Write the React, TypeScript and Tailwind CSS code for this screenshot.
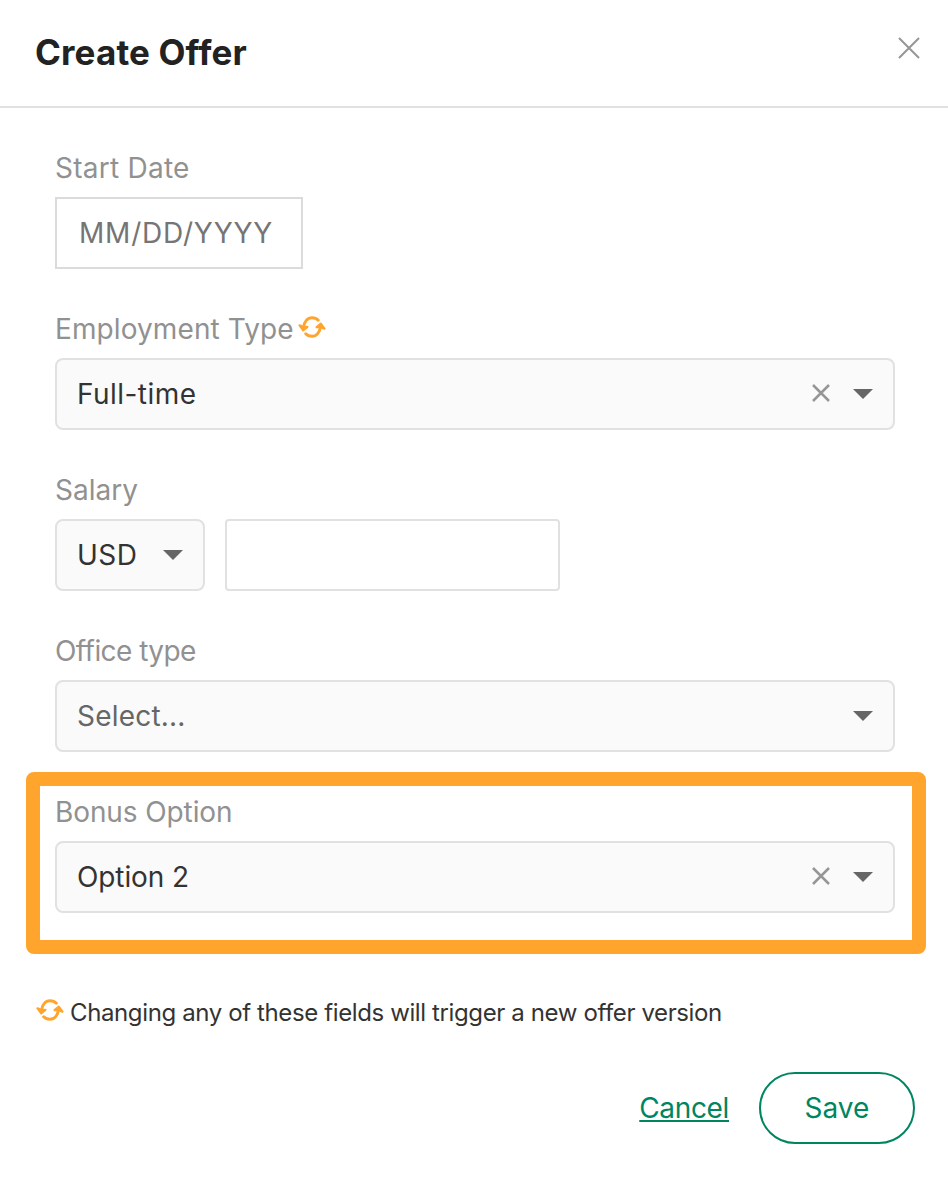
import { useState } from "react";
import type { ReactNode } from "react";

export default function CreateOffer() {
  const [employment, setEmployment] = useState("Full-time");
  const [bonus, setBonus] = useState("Option 2");

  return (
    <main className="min-h-[1182px] w-[948px] bg-white font-['Inter',sans-serif] text-[28px] text-[#333]">
      <header className="flex h-[108px] items-start justify-between border-b-2 border-[#e1e1e1] pt-7 pr-7 pl-[35px]">
        <h1 className="text-[35px] leading-[48px] font-bold tracking-[0.15px] whitespace-nowrap text-[#222]">
          Create Offer
        </h1>
        <button aria-label="Close" className="mt-[9px]">
          <Cross size={22} />
        </button>
      </header>

      <div className="flex flex-col gap-10 pt-10 pr-[53px] pl-[55px]">
        <Field label={<span className="tracking-[0.25px]">Start Date</span>}>
          <input
            placeholder="MM/DD/YYYY"
            className="h-[72px] w-[248px] border-2 border-[#dbdbdb] px-[22px] tracking-[0.8px] outline-none placeholder:text-[#757575]"
          />
        </Field>

        <Field
          label={
            <>
              <span className="tracking-[0.1px]">Employment Type</span>
              <Sync className="mt-[6px] ml-1" />
            </>
          }
        >
          <Select value={employment} onClear={() => setEmployment("")} className="tracking-[0.45px]" />
        </Field>

        <Field label={<span>Salary</span>}>
          <div className="flex gap-5">
            <button className="flex h-[72px] w-[150px] items-center justify-between rounded-lg border-2 border-[#e1e1e1] bg-[#fafafa] px-5">
              <span className="tracking-[0.5px]">USD</span>
              <Caret />
            </button>
            <input
              aria-label="Salary"
              className="h-[72px] w-[335px] rounded-[4px] border-2 border-[#e1e1e1] px-5 outline-none"
            />
          </div>
        </Field>

        <Field label={<span className="tracking-[-0.55px]">Office type</span>}>
          <Select value="" className="tracking-[0.2px]" />
        </Field>
      </div>

      <section className="mt-5 ml-[26px] w-[900px] rounded-[8px] border-14 border-[#ffa52d] pt-1.5 pr-[17px] pb-[27px] pl-[15px]">
        <Field label={<span className="tracking-[-0.1px]">Bonus Option</span>}>
          <Select value={bonus} onClear={() => setBonus("")} className="tracking-[-0.1px]" />
        </Field>
      </section>

      <p className="mt-[39px] flex h-10 pl-[36px] text-[24px] leading-10">
        <Sync className="mt-[5px] mr-1.5" />
        <span className="tracking-[-0.38px] whitespace-nowrap">
          Changing any of these fields will trigger a new offer version
        </span>
      </p>

      <footer className="mt-[39px] flex items-center justify-end gap-[30px] pr-[33px] text-[#008561]">
        <button className="tracking-[-0.35px] underline decoration-2 underline-offset-2">Cancel</button>
        <button className="h-[72px] w-[156px] rounded-full border-2 border-[#008561]">Save</button>
      </footer>
    </main>
  );
}

function Field({ label, children }: { label: ReactNode; children: ReactNode }) {
  return (
    <div>
      <div className="flex h-[49px] leading-10 whitespace-nowrap text-[#919191]">{label}</div>
      {children}
    </div>
  );
}

function Select({
  value,
  onClear,
  className,
}: {
  value: string;
  onClear?: () => void;
  className: string;
}) {
  return (
    <div className="flex h-[72px] w-full items-center rounded-lg border-2 border-[#e1e1e1] bg-[#fafafa] px-5">
      <span className={`flex-1 ${value ? "" : "text-[#666]"} ${className}`}>
        {value || "Select..."}
      </span>
      {value && (
        <button aria-label="Clear" onClick={onClear} className="mr-[23px] mb-0.5">
          <Cross size={18} strokeWidth={2.5} />
        </button>
      )}
      <Caret />
    </div>
  );
}

function Caret() {
  return (
    <svg width="20" height="10" viewBox="0 0 20 10" fill="#666">
      <path d="M0 0h20L10 10z" />
    </svg>
  );
}

function Cross({ size, strokeWidth = 2 }: { size: number; strokeWidth?: number }) {
  return (
    <svg
      width={size}
      height={size}
      viewBox={`0 0 ${size} ${size}`}
      stroke="#969696"
      strokeWidth={strokeWidth}
    >
      <path d={`M1 1 ${size - 1} ${size - 1}M${size - 1} 1 1 ${size - 1}`} />
    </svg>
  );
}

function Sync({ className }: { className: string }) {
  return (
    <svg
      width="28"
      height="24"
      viewBox="0 0 28 24"
      fill="none"
      stroke="#ffa52d"
      strokeWidth="3"
      strokeLinecap="round"
      strokeLinejoin="round"
      className={className}
    >
      <path d="M5.6 12.4C6 6.6 9.6 2.7 14 2.7Q18 2.7 20.3 5.2M22.4 11.6C22 17.4 18.4 21.3 14 21.3Q10 21.3 7.7 18.8" />
      <path
        d="M1.5 10.4 5.2 15.3 9.4 11.8 5.8 12zM26.5 13.6 22.8 8.7 18.6 12.2 22.2 12z"
        fill="#ffa52d"
        strokeWidth="2.2"
      />
    </svg>
  );
}
